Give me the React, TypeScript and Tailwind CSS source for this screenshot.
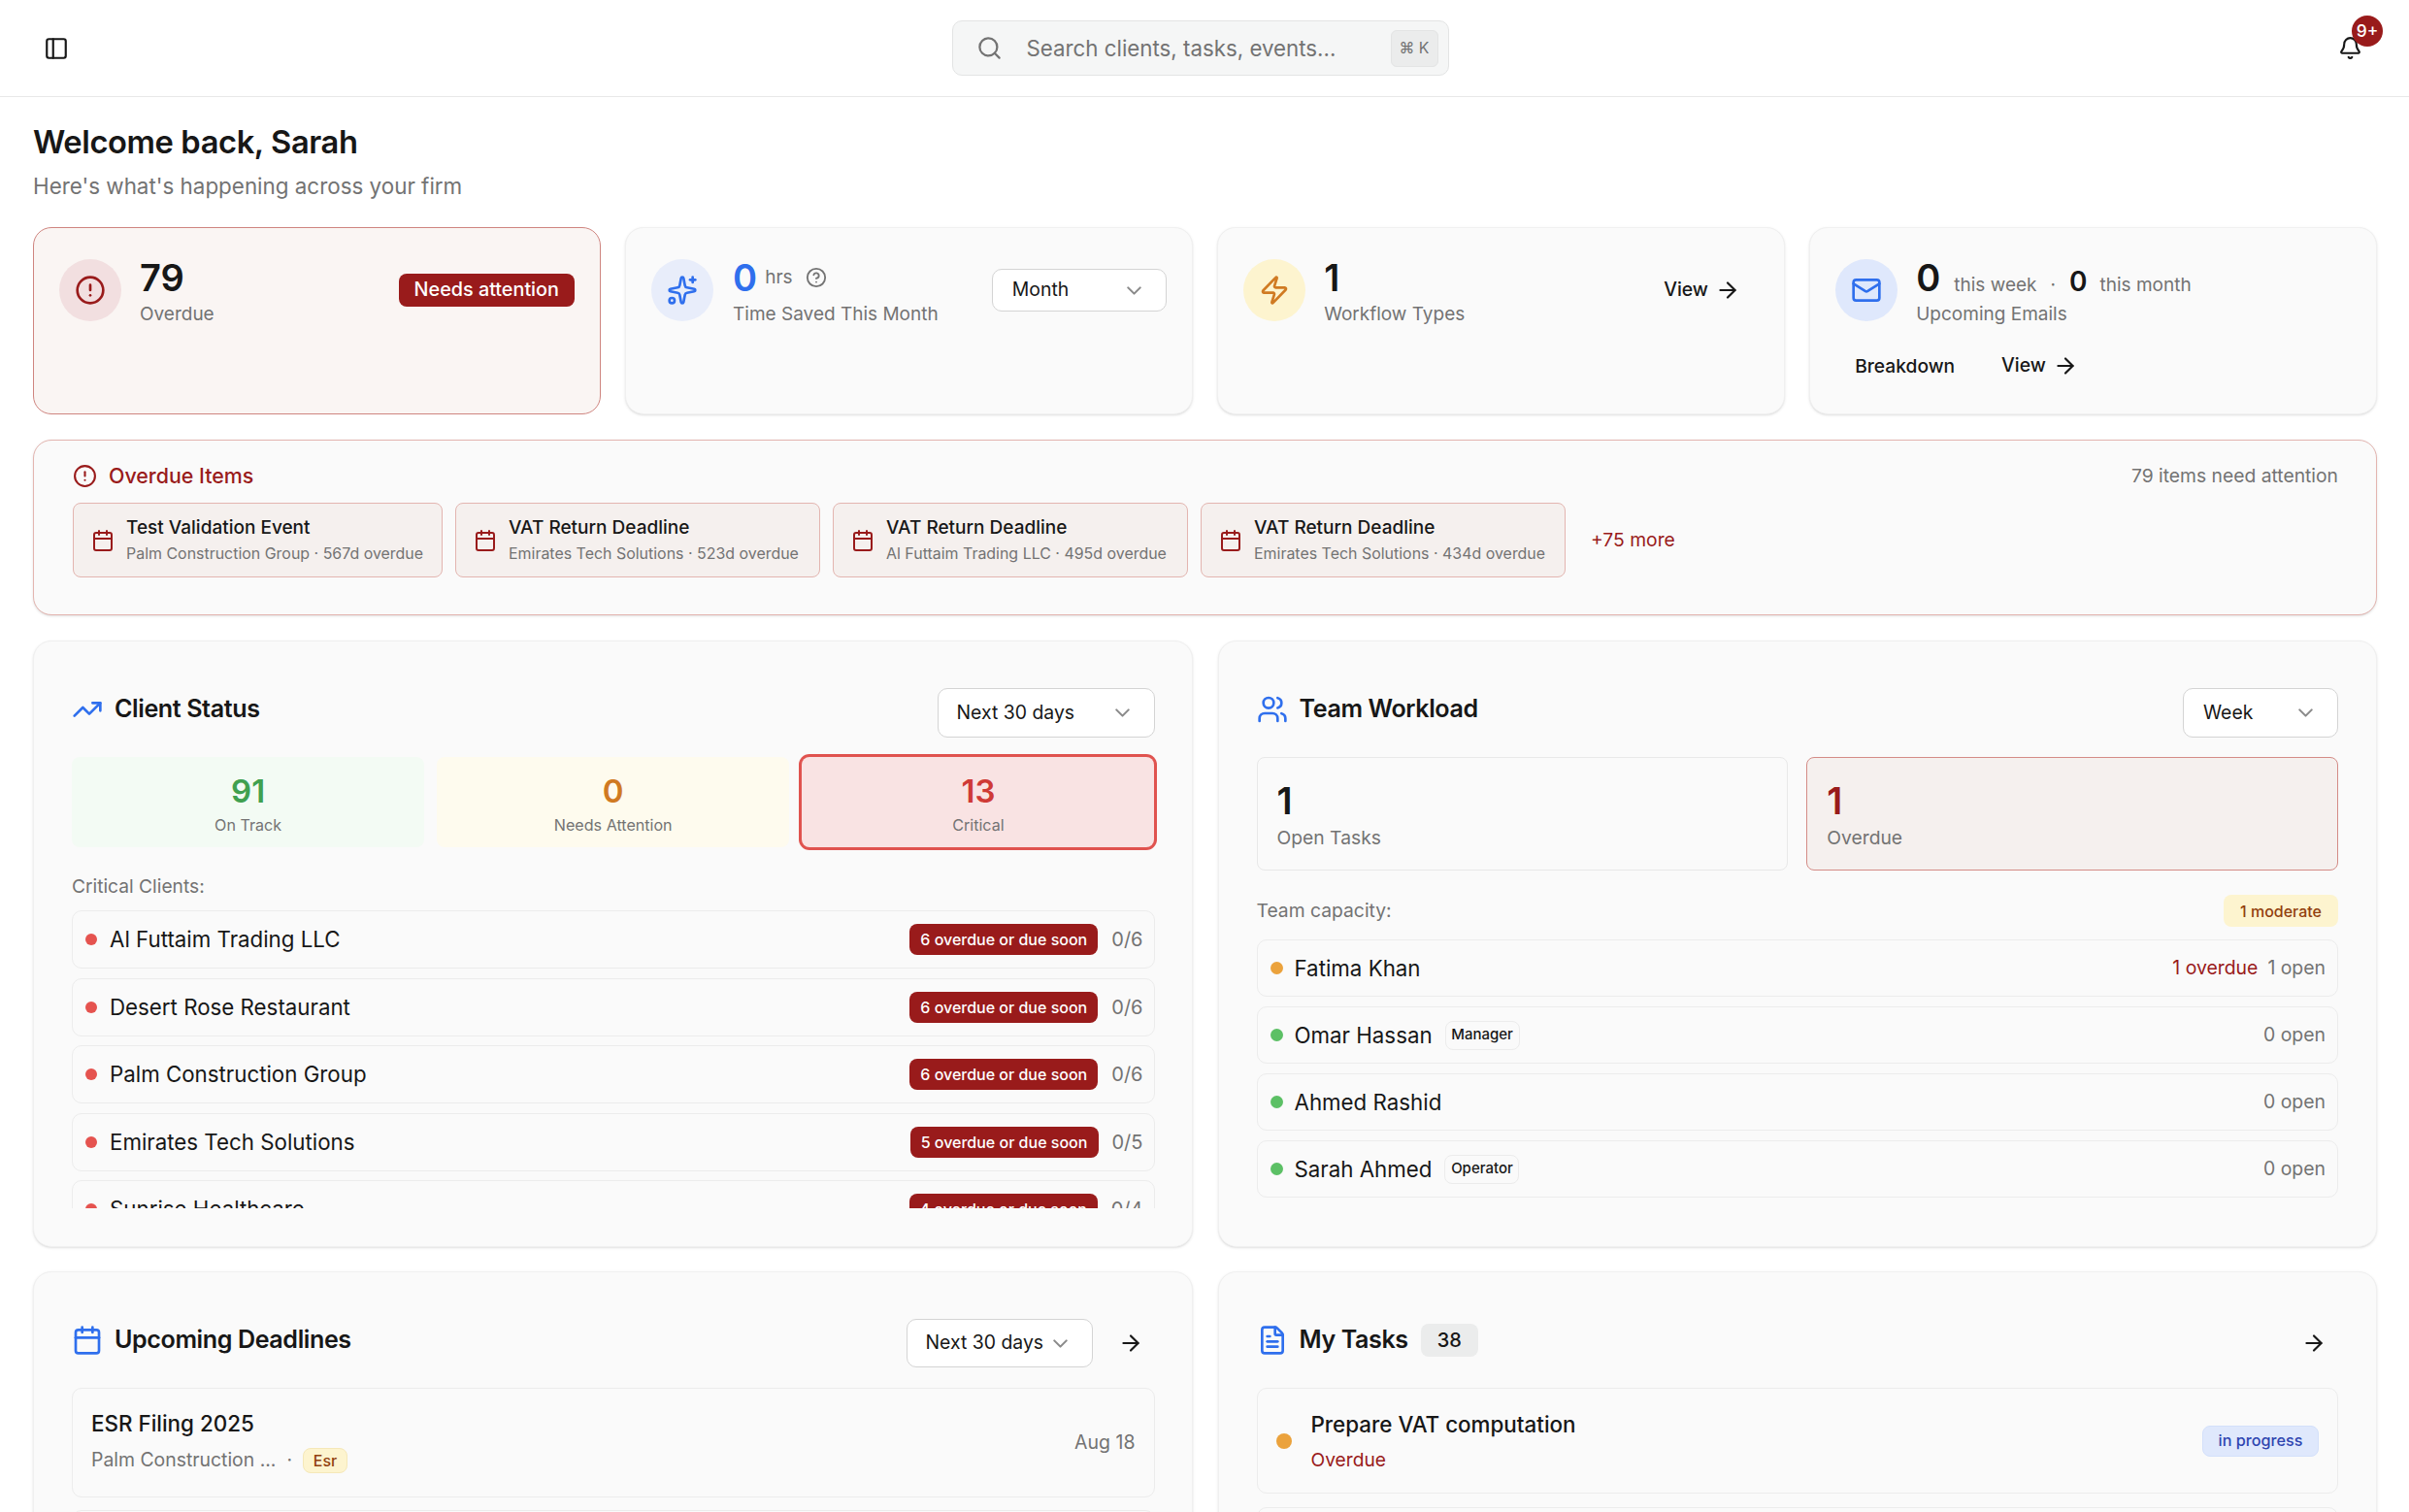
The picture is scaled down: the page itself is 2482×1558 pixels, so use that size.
import { PanelLeft, Search, Bell, CircleAlert, Sparkles, ChevronDown, Zap, Mail, ArrowRight, Calendar, TrendingUp, Users, FileText, CircleHelp } from "lucide-react";

function Select({ label, className }: { label: string; className: string }) {
  return (
    <div className={`flex items-center justify-between bg-white border border-[#d4d4d4] rounded-[10px] text-[19.4px] text-[#171717] ${className}`}>
      <span>{label}</span>
      <ChevronDown className="w-[25px] h-[25px] text-[#8a8a8a]" strokeWidth={2} />
    </div>
  );
}

function ViewLink() {
  return (
    <span className="flex items-center gap-[7px] text-[19.4px] font-medium text-[#171717]">
      View <ArrowRight className="w-[26px] h-[26px]" />
    </span>
  );
}

function ClientRow({ name, n, t }: { name: string; n: number; t: number }) {
  return (
    <div className="h-[60px] shrink-0 flex items-center border border-[#ececec] rounded-[10px] pl-[13px] pr-[11px] bg-[#fafafa]">
      <span className="w-[12px] h-[12px] rounded-full bg-[#e5534f] mr-[13px]" />
      <span className="text-[22.3px] text-[#171717]">{name}</span>
      <span className="ml-auto bg-[#991b1b] text-white text-[16px] font-medium rounded-[8px] h-[32px] w-[194px] flex items-center justify-center whitespace-nowrap">{n} overdue or due soon</span>
      <span className="ml-[14px] text-[20px] text-[#737373]">0/{t}</span>
    </div>
  );
}

function TeamRow({ name, role, right, dot }: { name: string; role?: string; right: React.ReactNode; dot: string }) {
  return (
    <div className="h-[59px] flex items-center border border-[#ececec] rounded-[10px] pl-[13px] pr-[12px] bg-[#fafafa]">
      <span className={`w-[13px] h-[13px] rounded-full mr-[12px] ${dot}`} />
      <span className="text-[22.3px] text-[#171717]">{name}</span>
      {role && <span className="ml-[13px] border border-[#ececec] rounded-[8px] h-[30px] w-[77px] flex items-center justify-center text-[15px] font-medium text-[#171717]">{role}</span>}
      <span className="ml-auto text-[19.4px] text-[#737373]">{right}</span>
    </div>
  );
}

function OverdueItem({ title, sub, w }: { title: string; sub: string; w: string }) {
  return (
    <div className={`h-[77px] flex items-center border border-[#e3b5b0] bg-[#f5f0ee] rounded-[8px] pl-[18px] ${w}`}>
      <Calendar className="w-[24px] h-[24px] text-[#991b1b] mr-[12px] shrink-0" />
      <div className="whitespace-nowrap">
        <div className="text-[19px] font-medium text-[#171717] leading-[28px]">{title}</div>
        <div className="text-[15.95px] text-[#737373] leading-[24px] mt-[1px]">{sub}</div>
      </div>
    </div>
  );
}

export default function App() {
  return (
    <div className="h-screen overflow-hidden bg-white text-[#171717]" style={{ fontFamily: "Inter, sans-serif" }}>
      <header className="h-[100px] border-b border-[#e8e8e8] flex items-center justify-between pl-[45px] pr-[48px] relative">
        <PanelLeft className="w-[26px] h-[26px]" />
        <div className="w-[512px] h-[57px] mr-[7px] bg-[#f5f6f6] border border-[#e3e4e4] rounded-[10px] flex items-center pl-[24px] pr-[10px]">
          <Search className="w-[27px] h-[27px] text-[#737373]" />
          <span className="ml-[25px] text-[22.3px] text-[#737373]">Search clients, tasks, events...</span>
          <span className="ml-auto w-[49px] h-[38px] bg-[#ebecec] border border-[#e3e4e4] rounded-[6px] flex items-center justify-center text-[15.8px] text-[#737373]">⌘ K</span>
        </div>
        <div className="relative w-[25px] h-[25px]">
          <Bell className="w-[25px] h-[25px]" />
          <span className="absolute -top-[21px] left-[14px] w-[32px] h-[32px] rounded-full bg-[#991b1b] text-white text-[17.4px] font-medium flex items-center justify-center">9+</span>
        </div>
      </header>

      <main className="pl-[34px] pr-[33px] pt-[25px]">
        <h1 className="text-[32.7px] leading-[42px] font-semibold tracking-[-0.4px]">Welcome back, Sarah</h1>
        <p className="text-[22.4px] leading-[32px] text-[#737373] mt-[9px]">Here's what's happening across your firm</p>

        <div className="grid grid-cols-4 gap-[25.3px] mt-[26px]">
          <div className="h-[193px] rounded-[19px] border border-[#cf8580] bg-[#faf5f3] p-[32px_26px] flex items-start">
            <div className="w-[64px] h-[64px] rounded-full bg-[#f2dfe0] flex items-center justify-center"><CircleAlert className="w-[32px] h-[32px] text-[#991b1b]" /></div>
            <div className="ml-[19px]">
              <div className="text-[38px] leading-[38px] font-semibold">79</div>
              <div className="text-[19px] leading-[28px] text-[#737373] mt-[5px]">Overdue</div>
            </div>
            <span className="ml-auto mt-[15px] h-[34px] w-[181px] rounded-[8px] bg-[#991b1b] text-white text-[19.8px] font-medium flex items-center justify-center">Needs attention</span>
          </div>

          <div className="h-[193px] rounded-[19px] border border-[#f0f0f0] bg-[#fafafa] shadow-sm p-[32px_26px] flex items-start">
            <div className="w-[64px] h-[64px] rounded-full bg-[#e8edfa] flex items-center justify-center"><Sparkles className="w-[32px] h-[32px] text-[#2f6fed]" /></div>
            <div className="ml-[20px]">
              <div className="flex items-center h-[38px]">
                <span className="text-[38px] leading-[38px] font-semibold text-[#2f6fed]">0</span>
                <span className="text-[19px] text-[#737373] ml-[8px]">hrs</span>
                <CircleHelp className="w-[22px] h-[22px] text-[#737373] ml-[13px]" />
              </div>
              <div className="text-[19px] leading-[28px] text-[#737373] mt-[5px]">Time Saved This Month</div>
            </div>
            <Select label="Month" className="ml-auto mt-[10px] w-[180px] h-[44px] pl-[20px] pr-[20px]" />
          </div>

          <div className="h-[193px] rounded-[19px] border border-[#f0f0f0] bg-[#fafafa] shadow-sm p-[32px_26px] flex items-start">
            <div className="w-[64px] h-[64px] rounded-full bg-[#fdf4cf] flex items-center justify-center"><Zap className="w-[32px] h-[32px] text-[#d07a22]" /></div>
            <div className="ml-[19px]">
              <div className="text-[38px] leading-[38px] font-semibold">1</div>
              <div className="text-[19px] leading-[28px] text-[#737373] mt-[5px]">Workflow Types</div>
            </div>
            <div className="ml-auto mt-[15px] mr-[19px] h-[34px] flex items-center"><ViewLink /></div>
          </div>

          <div className="h-[193px] rounded-[19px] border border-[#f0f0f0] bg-[#fafafa] shadow-sm p-[32px_26px]">
            <div className="flex items-start">
              <div className="w-[64px] h-[64px] rounded-full bg-[#dfe8fc] flex items-center justify-center"><Mail className="w-[32px] h-[32px] text-[#2f6fed]" /></div>
              <div className="ml-[19px]">
                <div className="flex items-baseline h-[38px] leading-[38px] text-[#737373] text-[19px]">
                  <span className="text-[38px] font-semibold text-[#171717]">0</span>
                  <span className="ml-[14px]">this week</span>
                  <span className="mx-[14px]">·</span>
                  <span className="text-[28px] font-semibold text-[#171717]">0</span>
                  <span className="ml-[13px]">this month</span>
                </div>
                <div className="text-[19px] leading-[28px] text-[#737373] mt-[5px]">Upcoming Emails</div>
              </div>
            </div>
            <div className="flex items-center mt-[22px] pl-[20px] h-[34px]">
              <span className="text-[19.2px] font-medium">Breakdown</span>
              <span className="ml-[48px]"><ViewLink /></span>
            </div>
          </div>
        </div>

        <section className="mt-[26px] h-[181px] rounded-[19px] border border-[#e3b5b0] bg-[#fafafa] shadow-sm pl-[40px] pr-[39px] pt-[21px]">
          <div className="flex items-center h-[30px]">
            <CircleAlert className="w-[25px] h-[25px] text-[#991b1b]" />
            <span className="ml-[12px] text-[21.4px] font-medium text-[#991b1b]">Overdue Items</span>
            <span className="ml-auto text-[19.3px] text-[#737373]">79 items need attention</span>
          </div>
          <div className="flex items-center mt-[13px] gap-[13px]">
            <OverdueItem title="Test Validation Event" sub="Palm Construction Group · 567d overdue" w="w-[381px]" />
            <OverdueItem title="VAT Return Deadline" sub="Emirates Tech Solutions · 523d overdue" w="w-[376px]" />
            <OverdueItem title="VAT Return Deadline" sub="Al Futtaim Trading LLC · 495d overdue" w="w-[366px]" />
            <OverdueItem title="VAT Return Deadline" sub="Emirates Tech Solutions · 434d overdue" w="w-[376px]" />
            <span className="ml-[13px] text-[19.3px] text-[#991b1b]">+75 more</span>
          </div>
        </section>

        <div className="grid grid-cols-2 gap-x-[26px] gap-y-[25px] mt-[26px]">
          <section className="h-[625px] rounded-[19px] border border-[#f0f0f0] bg-[#fafafa] shadow-sm pl-[39px] pr-[38px] pt-[48px]">
            <div className="flex items-start justify-between h-[51px]">
              <div className="flex items-center h-[43px]">
                <TrendingUp className="w-[32px] h-[32px] text-[#2f6fed]" />
                <h2 className="ml-[12px] text-[25.1px] font-semibold tracking-[-0.4px]">Client Status</h2>
              </div>
              <Select label="Next 30 days" className="w-[224px] h-[51px] pl-[19px] pr-[20px]" />
            </div>
            <div className="grid grid-cols-3 gap-[13px] mt-[20px]">
              <div className="h-[93px] rounded-[8px] bg-[#f3fbf4] flex flex-col items-center justify-center pt-[4px]">
                <div className="text-[33px] leading-[38px] font-semibold text-[#40a04f]">91</div>
                <div className="text-[16.1px] leading-[24px] text-[#737373] mt-[4px]">On Track</div>
              </div>
              <div className="h-[93px] rounded-[8px] bg-[#fefbee] flex flex-col items-center justify-center pt-[4px]">
                <div className="text-[33px] leading-[38px] font-semibold text-[#d07a22]">0</div>
                <div className="text-[16.1px] leading-[24px] text-[#737373] mt-[4px]">Needs Attention</div>
              </div>
              <div className="h-[93px] rounded-[8px] bg-[#f9e3e3] ring-[3px] ring-[#e0534f] flex flex-col items-center justify-center pt-[4px]">
                <div className="text-[33px] leading-[38px] font-semibold text-[#cf3a36]">13</div>
                <div className="text-[16.1px] leading-[24px] text-[#737373] mt-[4px]">Critical</div>
              </div>
            </div>
            <div className="text-[19.2px] leading-[28px] text-[#737373] mt-[26px]">Critical Clients:</div>
            <div className="mt-[11px] h-[307px] overflow-hidden flex flex-col gap-[9.5px]">
              <ClientRow name="Al Futtaim Trading LLC" n={6} t={6} />
              <ClientRow name="Desert Rose Restaurant" n={6} t={6} />
              <ClientRow name="Palm Construction Group" n={6} t={6} />
              <ClientRow name="Emirates Tech Solutions" n={5} t={5} />
              <ClientRow name="Sunrise Healthcare" n={4} t={4} />
            </div>
          </section>

          <section className="h-[625px] rounded-[19px] border border-[#f0f0f0] bg-[#fafafa] shadow-sm px-[39px] pt-[48px]">
            <div className="flex items-start justify-between h-[51px]">
              <div className="flex items-center h-[43px]">
                <Users className="w-[32px] h-[32px] text-[#2f6fed]" />
                <h2 className="ml-[12px] text-[25.1px] font-semibold tracking-[-0.4px]">Team Workload</h2>
              </div>
              <Select label="Week" className="w-[160px] h-[51px] pl-[20px] pr-[20px]" />
            </div>
            <div className="grid grid-cols-2 gap-[19px] mt-[20px]">
              <div className="h-[117px] rounded-[8px] border border-[#e8e8e8] px-[20px] pt-[25px]">
                <div className="text-[38px] leading-[38px] font-semibold">1</div>
                <div className="text-[19.3px] leading-[28px] text-[#737373] mt-[5px]">Open Tasks</div>
              </div>
              <div className="h-[117px] rounded-[8px] border border-[#d48c87] bg-[#f5f0ee] px-[20px] pt-[25px]">
                <div className="text-[38px] leading-[38px] font-semibold text-[#991b1b]">1</div>
                <div className="text-[19.3px] leading-[28px] text-[#737373] mt-[5px]">Overdue</div>
              </div>
            </div>
            <div className="flex items-center justify-between mt-[25px] h-[33px]">
              <span className="text-[19.3px] text-[#737373]">Team capacity:</span>
              <span className="w-[118px] h-[33px] rounded-[8px] bg-[#fdf4cf] text-[#92400e] text-[16px] font-medium flex items-center justify-center">1 moderate</span>
            </div>
            <div className="mt-[13px] flex flex-col gap-[10px]">
              <TeamRow name="Fatima Khan" dot="bg-[#eba23c]" right={<><span className="text-[#991b1b]">1 overdue</span><span className="ml-[10px]">1 open</span></>} />
              <TeamRow name="Omar Hassan" role="Manager" dot="bg-[#5cc065]" right="0 open" />
              <TeamRow name="Ahmed Rashid" dot="bg-[#5cc065]" right="0 open" />
              <TeamRow name="Sarah Ahmed" role="Operator" dot="bg-[#5cc065]" right="0 open" />
            </div>
          </section>

          <section className="h-[400px] rounded-[19px] border border-[#f0f0f0] bg-[#fafafa] shadow-sm pl-[39px] pr-[38px] pt-[48px]">
            <div className="flex items-start h-[50px]">
              <div className="flex items-center h-[43px]">
                <Calendar className="w-[32px] h-[32px] text-[#2f6fed]" />
                <h2 className="ml-[12px] text-[25.1px] font-semibold tracking-[-0.4px]">Upcoming Deadlines</h2>
              </div>
              <Select label="Next 30 days" className="ml-auto w-[192px] h-[50px] pl-[19px] pr-[20px]" />
              <ArrowRight className="w-[26px] h-[26px] self-center ml-[26px] mr-[12px]" />
            </div>
            <div className="mt-[21px] h-[113px] border border-[#ececec] rounded-[10px] flex items-center justify-between px-[19px]">
              <div>
                <div className="text-[22.4px] font-medium leading-[32px] -mt-[2px]">ESR Filing 2025</div>
                <div className="flex items-center mt-[7px] text-[19.4px] text-[#737373]">
                  <span>Palm Construction ...</span>
                  <span className="mx-[11px]">·</span>
                  <span className="w-[46px] h-[26px] rounded-[8px] bg-[#fdf4cf] border border-[#f5e8b8] text-[#92400e] text-[16px] font-medium flex items-center justify-center">Esr</span>
                </div>
              </div>
              <span className="text-[19.5px] text-[#737373]">Aug 18</span>
            </div>
            <div className="mt-[13px] h-[113px] border border-[#ececec] rounded-[10px]" />
          </section>

          <section className="h-[400px] rounded-[19px] border border-[#f0f0f0] bg-[#fafafa] shadow-sm px-[39px] pt-[48px]">
            <div className="flex items-start h-[50px]">
              <div className="flex items-center h-[43px]">
                <FileText className="w-[32px] h-[32px] text-[#2f6fed]" />
                <h2 className="ml-[12px] text-[25.1px] font-semibold tracking-[-0.4px]">My Tasks</h2>
                <span className="ml-[13px] w-[59px] h-[34px] rounded-[8px] bg-[#ebecec] text-[20px] font-medium flex items-center justify-center">38</span>
              </div>
              <ArrowRight className="w-[26px] h-[26px] self-center ml-auto mr-[12px]" />
            </div>
            <div className="mt-[21px] h-[109px] border border-[#ececec] rounded-[10px] flex items-center pl-[19px] pr-[19px]">
              <span className="w-[16px] h-[16px] rounded-full bg-[#eba23c]" />
              <div className="ml-[20px]">
                <div className="text-[22.4px] font-medium leading-[32px]">Prepare VAT computation</div>
                <div className="text-[19.2px] leading-[28px] text-[#991b1b] mt-[6px]">Overdue</div>
              </div>
              <span className="ml-auto w-[120px] h-[32px] rounded-[8px] bg-[#dfe8fc] border border-[#d3e0fa] text-[#2f45b0] text-[16.2px] font-medium flex items-center justify-center">in progress</span>
            </div>
            <div className="mt-[14px] h-[109px] border border-[#ececec] rounded-[10px]" />
          </section>
        </div>
      </main>
    </div>
  );
}
